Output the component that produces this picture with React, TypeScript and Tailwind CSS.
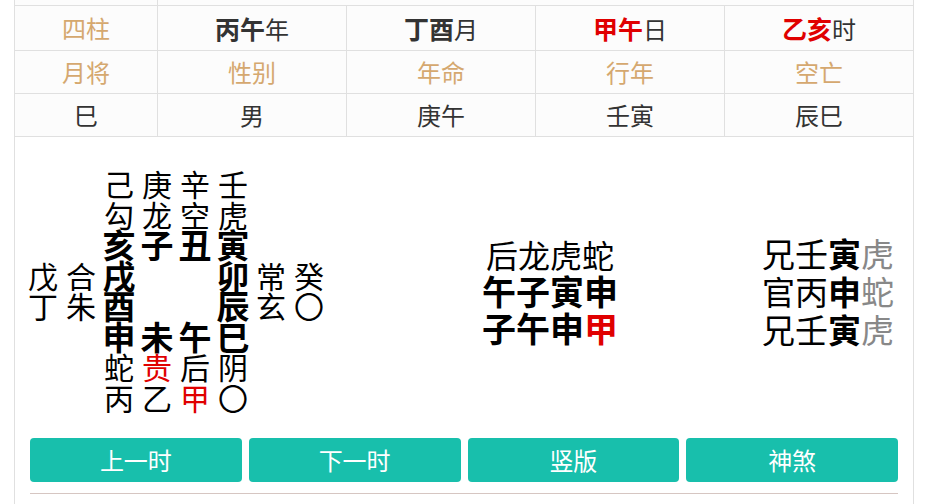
const labels = ["月将", "性别", "年命", "行年", "空亡"];
const values = ["巳", "男", "庚午", "壬寅", "辰巳"];

const pillars = [
  { gz: "丙午", unit: "年", red: false },
  { gz: "丁酉", unit: "月", red: false },
  { gz: "甲午", unit: "日", red: true },
  { gz: "乙亥", unit: "时", red: true },
];

// b = bold, r = red
type Cell = { t: string; b?: boolean; r?: boolean } | null;

const n = (t: string): Cell => ({ t });
const b = (t: string): Cell => ({ t, b: true });
const r = (t: string): Cell => ({ t, r: true });

const grid: Cell[][] = [
  [null, null, n("己"), n("庚"), n("辛"), n("壬"), null, null],
  [null, null, n("勾"), n("龙"), n("空"), n("虎"), null, null],
  [null, null, b("亥"), b("子"), b("丑"), b("寅"), null, null],
  [n("戊"), n("合"), b("戌"), null, null, b("卯"), n("常"), n("癸")],
  [n("丁"), n("朱"), b("酉"), null, null, b("辰"), n("玄"), n("〇")],
  [null, null, b("申"), b("未"), b("午"), b("巳"), null, null],
  [null, null, n("蛇"), r("贵"), n("后"), n("阴"), null, null],
  [null, null, n("丙"), n("乙"), r("甲"), n("〇"), null, null],
];

const siKe = [
  { q: "兄", g: "壬", z: "寅", s: "虎" },
  { q: "官", g: "丙", z: "申", s: "蛇" },
  { q: "兄", g: "壬", z: "寅", s: "虎" },
];

const cols = "grid grid-cols-[143px_189px_189px_189px_188px]";

export default function App() {
  return (
    <div className="w-[936px] h-[504px] overflow-hidden bg-white font-['Noto_Sans_CJK_SC','Noto_Sans',sans-serif]">
      <div className="ml-[14px] w-[900px] border-x border-[#e0e0e0]">
        {/* info table */}
        <div className="bg-[#fcfcfc]">
          <div className="grid grid-cols-[143px_755px] h-[6px] border-b border-[#e0e0e0]">
            <div className="border-r border-[#e0e0e0]" />
            <div />
          </div>

          <div className={`${cols} h-[45px] border-b border-[#e0e0e0] text-[24px] leading-[44px] text-center`}>
            <div className="border-r border-[#e0e0e0] text-[#d5a86f]">四柱</div>
            {pillars.map((p, i) => (
              <div key={i} className={i < 3 ? "border-r border-[#e0e0e0] text-[#333]" : "text-[#333]"}>
                <span className={p.red ? "text-[25px] font-bold text-[#e00000]" : "text-[25px] font-bold text-[#333]"}>{p.gz}</span>
                {p.unit}
              </div>
            ))}
          </div>

          <div className={`${cols} h-[43px] border-b border-[#e0e0e0] text-[24px] leading-[42px] text-center text-[#d5a86f]`}>
            {labels.map((l, i) => (
              <div key={i} className={i < 4 ? "border-r border-[#e0e0e0]" : ""}>
                {l}
              </div>
            ))}
          </div>

          <div className={`${cols} h-[43px] border-b border-[#e0e0e0] text-[24px] leading-[42px] text-center text-[#333]`}>
            {values.map((v, i) => (
              <div key={i} className={i < 4 ? "border-r border-[#e0e0e0]" : ""}>
                {v}
              </div>
            ))}
          </div>
        </div>

        {/* chart */}
        <div className="flex items-start pt-[31px] pb-[26px] text-black">
          <div className="ml-[9px] grid grid-cols-[repeat(8,38px)]">
            {grid.flat().map((c, i) => (
              <div
                key={i}
                className={
                  "h-[30.5px] leading-[30.5px] text-center " +
                  (c?.b ? "text-[33px] font-bold " : "text-[30px] ") +
                  (c?.r ? "text-[#e00000]" : "")
                }
              >
                {c ? c.t : ""}
              </div>
            ))}
          </div>

          <div className="ml-[154px] mt-[68px] w-[136px] text-center">
            <div className="text-[32px] leading-[36px]">后龙虎蛇</div>
            <div className="text-[34px] leading-[37px] font-bold">午子寅申</div>
            <div className="text-[34px] leading-[37px] font-bold">
              子午申<span className="text-[#e00000]">甲</span>
            </div>
          </div>

          <div className="ml-[144px] mt-[66px]">
            {siKe.map((k, i) => (
              <div key={i} className="text-[33px] leading-[38px] whitespace-nowrap">
                {k.q}
                {k.g}
                <span className="font-bold">{k.z}</span>
                <span className="text-[#888]">{k.s}</span>
              </div>
            ))}
          </div>
        </div>

        {/* actions */}
        <div className="mx-[15px] flex gap-[7px]">
          {["上一时", "下一时", "竖版", "神煞"].map((t) => (
            <button
              key={t}
              className="flex-1 h-[44px] rounded-[4px] bg-[#18bfac] text-white text-[24px] leading-[44px] text-center"
            >
              {t}
            </button>
          ))}
        </div>
        <div className="mx-[15px] mt-[11px] border-t border-[#d6c6c2] h-[30px]" />
      </div>
    </div>
  );
}
